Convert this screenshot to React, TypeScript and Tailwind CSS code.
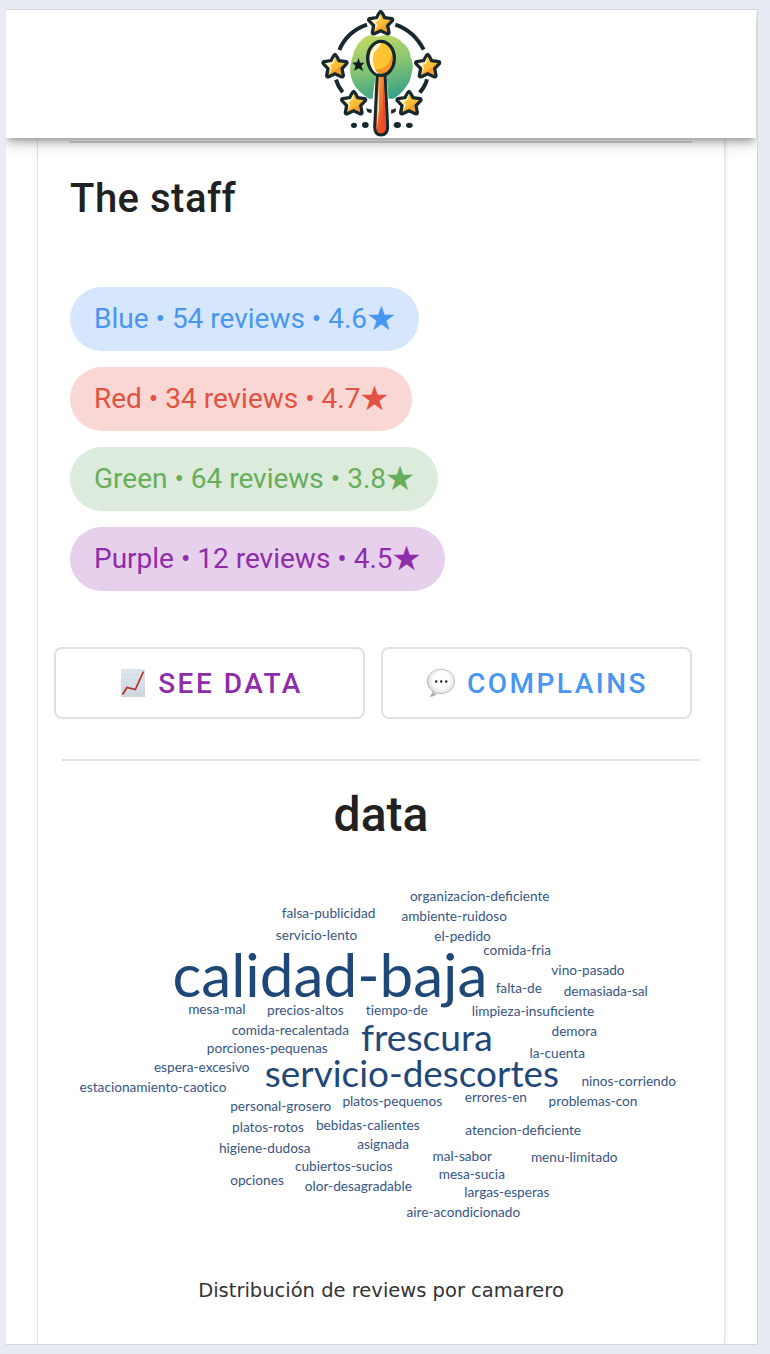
type Word = [text: string, left: number, baseline: number, width: number, size: number];

const words: Word[] = [
  ["organizacion-deficiente", 409.2, 900.7, 141, 13.65],
  ["falsa-publicidad", 281, 917.7, 95, 13.65],
  ["ambiente-ruidoso", 400.7, 921, 107, 13.65],
  ["servicio-lento", 275.3, 939.8, 82.5, 13.65],
  ["el-pedido", 434, 941, 57, 13.65],
  ["comida-fria", 482.6, 955, 69, 13.65],
  ["vino-pasado", 551.2, 975, 73.5, 13.65],
  ["falta-de", 495.3, 993, 47, 13.65],
  ["demasiada-sal", 563, 996, 85.5, 13.65],
  ["calidad-baja", 172, 997, 316, 60.2],
  ["mesa-mal", 187.6, 1014, 58.5, 13.65],
  ["precios-altos", 266.3, 1015, 78, 13.65],
  ["tiempo-de", 365.8, 1015, 62, 13.65],
  ["limpieza-insuficiente", 471, 1015.5, 124, 13.65],
  ["comida-recalentada", 230.6, 1035.4, 119.5, 13.65],
  ["frescura", 360.4, 1050.7, 133, 37.2],
  ["demora", 551, 1036, 46.5, 13.65],
  ["porciones-pequenas", 206.5, 1053.2, 121.5, 13.65],
  ["la-cuenta", 529, 1058, 56.5, 13.65],
  ["espera-excesivo", 153.7, 1072.1, 96, 13.65],
  ["servicio-descortes", 264.7, 1086.5, 294.5, 36.9],
  ["ninos-corriendo", 580.5, 1085.8, 96.5, 13.65],
  ["estacionamiento-caotico", 79, 1091.8, 148, 13.65],
  ["errores-en", 463.6, 1102, 64.5, 13.65],
  ["problemas-con", 548, 1105.8, 90, 13.65],
  ["platos-pequenos", 342.3, 1106, 100, 13.65],
  ["personal-grosero", 229.3, 1110.5, 103, 13.65],
  ["bebidas-calientes", 315.3, 1130, 105, 13.65],
  ["platos-rotos", 231, 1132, 74, 13.65],
  ["atencion-deficiente", 464.7, 1135.2, 117, 13.65],
  ["asignada", 356.6, 1149, 53, 13.65],
  ["higiene-dudosa", 218.5, 1153, 92.5, 13.65],
  ["mal-sabor", 432, 1161, 60.5, 13.65],
  ["menu-limitado", 530, 1162, 88.5, 13.65],
  ["cubiertos-sucios", 294.6, 1171, 98.5, 13.65],
  ["mesa-sucia", 438.3, 1179, 67, 13.65],
  ["opciones", 230, 1185, 54, 13.65],
  ["olor-desagradable", 303.6, 1191, 109.5, 13.65],
  ["largas-esperas", 463.2, 1197, 87.5, 13.65],
  ["aire-acondicionado", 405.6, 1217, 115.5, 13.65],
];

const staff = [
  { label: "Blue • 54 reviews • 4.6", width: "w-[349px]", tone: "bg-[#d6e6fc] text-[#4896f0]" },
  { label: "Red • 34 reviews • 4.7", width: "w-[342px]", tone: "bg-[#f8d7d4] text-[#e25241]" },
  { label: "Green • 64 reviews • 3.8", width: "w-[368px]", tone: "bg-[#dcebdb] text-[#67ae5b]" },
  { label: "Purple • 12 reviews • 4.5", width: "w-[375px]", tone: "bg-[#e7d0eb] text-[#8e2ca9]" },
];

function GoldStar({ x, y }: { x: number; y: number }) {
  return (
    <g transform={`translate(${x} ${y})`}>
      <path
        d="M0 -34 Q3 -34 12 -15 L33 -12 Q38 -10 35 -6 L21 9 L25 30 Q24 35 19 33 L0 24 L-19 33 Q-24 35 -25 30 L-21 9 L-35 -6 Q-38 -10 -33 -12 L-12 -15 Q-3 -34 0 -34 Z"
        fill="url(#gold)"
        stroke="#17292f"
        strokeWidth="10"
        strokeLinejoin="round"
      />
      <path d="M0 -27 L-9 -10 L-29 -7 L-15 7 L-18 25 L-10 8 L-15 -1 L-4 -8 Z" fill="#fff6d8" />
      <path d="M29 -7 L15 8 L19 27 L0 18 L-16 26 L5 11 Z" fill="#f59a26" opacity=".75" />
    </g>
  );
}

function Logo() {
  return (
    <svg viewBox="30 30 366 384" className="h-[128px] w-[122px]" aria-label="Reviews">
      <defs>
        <linearGradient id="gold" x1="0" y1="0" x2=".5" y2="1">
          <stop offset="0" stopColor="#ffd94a" />
          <stop offset="1" stopColor="#f8ad2b" />
        </linearGradient>
        <linearGradient id="disc" x1=".35" y1="0" x2=".6" y2="1">
          <stop offset="0" stopColor="#c0d862" />
          <stop offset=".45" stopColor="#8cc673" />
          <stop offset="1" stopColor="#36a184" />
        </linearGradient>
        <linearGradient id="handle" x1="0" y1="0" x2=".3" y2="1">
          <stop offset="0" stopColor="#f9a13a" />
          <stop offset="1" stopColor="#ef4b25" />
        </linearGradient>
      </defs>
      <path
        d="M156 119 Q170 106 184 106 Q199 113 211 108 Q225 103 244 109 Q263 113 276 127 Q295 141 300 160 Q302 177 307 186 Q311 202 304 222 Q302 243 289 259 Q276 281 250 296 L178 296 Q156 284 145 270 Q130 255 126 239 Q118 220 121 199 Q124 180 130 163 Q138 134 156 119 Z"
        fill="url(#disc)"
      />
      <g fill="none" stroke="#17292f" strokeWidth="12">
        <path d="M88 150 Q111 95 171 74" />
        <path d="M256 74 Q312 93 341 149" />
        <path d="M78 239 Q84 260 98 277" />
        <path d="M351 238 Q346 259 329 278" />
      </g>
      <GoldStar x={212} y={68} />
      <GoldStar x={75} y={197} />
      <GoldStar x={353} y={197} />
      <GoldStar x={131} y={308} />
      <GoldStar x={297} y={308} />
      <path d="M146 173 L150 188 L163 188 L154 198 L160 214 L146 205 L132 212 L137 198 L127 188 L141 187 Z" fill="#101820" />
      <g fill="#17292f">
        <path d="M168 325 L186 329 L184 340 L173 337 Z M258 325 L243 330 L244 342 L257 335 Z" />
        <ellipse cx="132" cy="376" rx="9" ry="8" />
        <ellipse cx="166" cy="375" rx="10" ry="9" />
        <ellipse cx="262" cy="375" rx="11" ry="9" />
        <ellipse cx="298" cy="376" rx="10" ry="8" />
      </g>
      <path d="M198 215 L186 310 L190 345 L188 382 Q188 411 213 412 Q239 411 239 382 L237 310 L229 215 Z" fill="#fff" />
      <path d="M202 218 L194 382 Q195 405 213 405 Q232 405 233 382 L225 218 Z" fill="url(#handle)" stroke="#17292f" strokeWidth="9" />
      <path d="M208 231 L207 330 L200 391 L203 309 Z" fill="#ffe0ad" />
      <path d="M220 233 L219 325 L212 389 L228 379 Z" fill="#e94b2b" />
      <ellipse cx="213" cy="175" rx="40" ry="51" fill="#ffc431" stroke="#17292f" strokeWidth="10" />
      <path d="M213 129 C181 133 172 178 186 204 C190 216 199 221 206 222 C188 202 188 184 190 168 C191 149 207 150 213 129 Z" fill="#fff8df" />
      <path d="M244 165 C252 190 243 218 209 221 Q198 216 195 208 C220 211 240 194 244 165 Z" fill="#f69425" />
    </svg>
  );
}

function ChartIcon() {
  return (
    <svg viewBox="0 0 26 30" className="h-[30px] w-[26px]" aria-hidden="true">
      <defs>
        <linearGradient id="sheet" x1="0" y1="0" x2="0" y2="1">
          <stop stopColor="#dbe7ef" />
          <stop offset="1" stopColor="#ccd5dd" />
        </linearGradient>
      </defs>
      <rect x="1" y="1" width="24" height="28" fill="url(#sheet)" />
      <path d="M1 6.5h24M1 12h24M1 17.5h24M1 23h24M7 1v28M13 1v28M19 1v28" stroke="#d3dee7" strokeWidth=".7" />
      <path d="M2.5 26.5 L7 19.5 L15.3 21.5 L23.5 3.5" fill="none" stroke="#b92c29" strokeWidth="1.7" />
    </svg>
  );
}

function BubbleIcon() {
  return (
    <svg viewBox="0 0 30 30" className="h-[30px] w-[30px]" aria-hidden="true">
      <defs>
        <radialGradient id="bubble" cx=".52" cy=".4" r=".58">
          <stop offset=".5" stopColor="#fff" />
          <stop offset=".8" stopColor="#e6e6e6" />
          <stop offset="1" stopColor="#b4b4b4" />
        </radialGradient>
      </defs>
      <path
        d="M15 1.3 C7 1.3 1.4 6.6 1.4 13.2 C1.4 18 3.7 21 6.8 23 Q6.5 26.5 4 28.5 Q8.5 28.2 11.5 25.2 C21 26.8 28.6 21.5 28.6 13.2 C28.6 6.5 23 1.3 15 1.3 Z"
        fill="url(#bubble)"
        stroke="#aaa"
        strokeWidth=".7"
      />
      <g fill="#222">
        <circle cx="10.2" cy="13.5" r="1.2" />
        <circle cx="15.2" cy="13.5" r="1.2" />
        <circle cx="20.2" cy="13.5" r="1.2" />
      </g>
    </svg>
  );
}

function WordCloud() {
  return (
    <svg viewBox="62 870 638 370" className="mx-auto block h-[370px] w-[638px]">
      <g fill="#1f4879" className="font-['Lato',sans-serif]">
        {words.map(([text, left, baseline, width, size]) => (
          <text
            key={text}
            x={left + width / 2}
            y={baseline}
            fontSize={size}
            textAnchor="middle"
            opacity={size < 20 ? 0.92 : 1}
            className={text.includes("ti") ? "[font-variant-ligatures:none]" : ""}
          >
            {text}
          </text>
        ))}
      </g>
    </svg>
  );
}

export default function App() {
  return (
    <div className="h-[1354px] w-[770px] overflow-hidden bg-[#e8ebf4] pl-[6px] pt-[9px] font-['Roboto',sans-serif]">
      <div className="flex h-[1336px] w-[752px] flex-col overflow-hidden border-y border-r border-[#d3d4dc] bg-white">
        <header className="relative z-10 flex h-[128px] w-[750px] shrink-0 justify-center bg-white shadow-[0_4px_8px_-2px_rgba(0,0,0,0.34),0_7px_14px_rgba(0,0,0,0.16)]">
          <Logo />
        </header>
        <main className="ml-[31px] flex w-[688px] grow flex-col border-x border-[#e4e4e4] shadow-[1px_0_4px_rgba(0,0,0,0.08)]">
          <div className="ml-8 mt-[3px] h-[2px] w-[622px] bg-[#d9d9d9]" />
          <h2 className="ml-8 mt-6 h-16 text-[40px] font-medium leading-[64px] tracking-[0.5px] text-[#212121]">The staff</h2>
          <div className="ml-8 mt-14 flex flex-col gap-4">
            {staff.map(({ label, width, tone }) => (
              <div key={label} className={`flex h-16 items-center rounded-full pl-6 text-[28px] ${width} ${tone}`}>
                <span className="whitespace-pre">{label}</span>
                <span className="flex w-7 justify-center pb-[3px] font-['DejaVu_Sans'] text-[34px] leading-none">★</span>
              </div>
            ))}
          </div>
          <div className="ml-4 mt-14 flex gap-4">
            <button className="flex h-[72px] w-[311px] items-center justify-center gap-3 rounded-lg border-2 border-[#e0e0e0] pl-1 text-[28px] font-medium tracking-[2.5px] text-[#8e2ca9]">
              <ChartIcon />
              <span className="pt-0.5">SEE DATA</span>
            </button>
            <button className="flex h-[72px] w-[311px] items-center justify-center gap-[11px] rounded-lg border-2 border-[#e0e0e0] pl-px text-[28px] font-medium tracking-[2.5px] text-[#4896f0]">
              <BubbleIcon />
              <span className="pt-0.5">COMPLAINS</span>
            </button>
          </div>
          <div className="ml-6 mt-10 h-[2px] w-[638px] bg-[#e0e0e0]" />
          <h1 className="mt-[22px] h-16 text-center text-[48px] font-medium leading-[64px] text-[#212121]">data</h1>
          <div className="mt-[23px]">
            <WordCloud />
          </div>
          <p className="mt-[35px] text-center font-['DejaVu_Sans',sans-serif] text-[19.5px] leading-8 text-[#333]">Distribución de reviews por camarero</p>
        </main>
      </div>
    </div>
  );
}
